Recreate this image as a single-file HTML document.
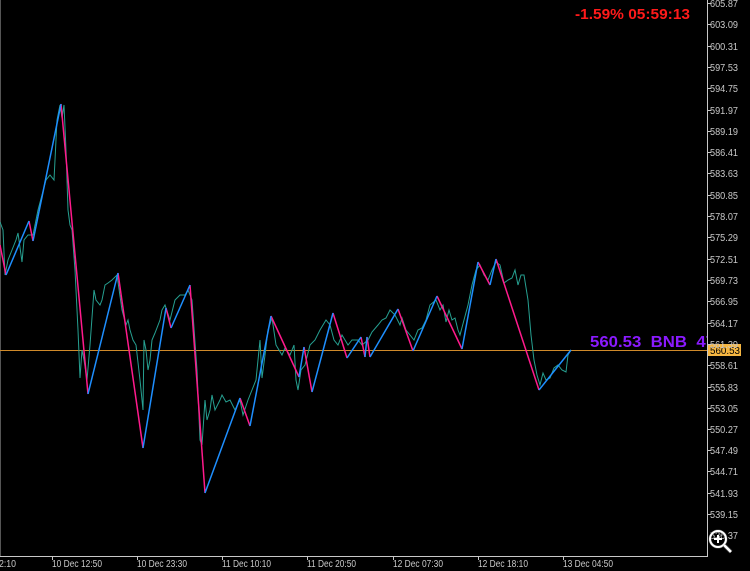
<!DOCTYPE html>
<html><head><style>
html,body{margin:0;padding:0;background:#000;width:750px;height:571px;overflow:hidden}
svg{display:block}
text{font-family:"Liberation Sans",sans-serif}
</style></head><body>
<svg width="750" height="571" viewBox="0 0 750 571" xmlns="http://www.w3.org/2000/svg">
<rect width="750" height="571" fill="#000"/>
<line x1="0.5" y1="0" x2="0.5" y2="556" stroke="#555"/>
<line x1="0" y1="350.5" x2="707" y2="350.5" stroke="#d08a2a"/>
<polyline fill="none" stroke="#26a091" stroke-width="1" points="0,222 3,230 5,275 8,260 12,250 16,240 18,233 22,262 24,240 28,235 33,235 38,210 42,195 46,180 50,175 54,180 55,160 57,120 60,105 62,118 64,105 66,150 68,210 70,225 72,230 75,270 78,330 80,378 82,350 84,360 87,380 90,345 94,290 96,300 100,305 102,300 105,285 108,283 112,280 117,275 122,310 126,325 128,320 130,330 133,340 136,345 140,380 143,410 144,340 146,350 148,370 150,360 152,340 155,333 160,320 162,310 165,305 170,320 175,300 180,295 185,295 188,290 192,300 197,370 200,440 202,445 205,400 207,420 210,410 212,395 215,410 220,400 222,395 226,402 230,400 235,410 240,400 243,415 248,400 252,390 256,380 260,340 262,378 265,355 268,330 272,318 276,345 279,350 282,355 285,348 290,355 294,345 296,380 298,390 301,370 305,365 310,345 315,340 320,330 326,320 330,325 334,340 338,345 342,335 348,345 352,340 358,340 362,345 368,340 372,332 378,325 382,320 386,318 390,310 395,315 400,325 402,318 406,330 410,335 414,340 418,330 422,328 426,320 430,305 436,300 440,310 443,305 446,322 449,310 452,320 455,318 458,330 460,335 464,320 468,305 472,285 476,270 480,265 484,275 488,280 492,270 496,262 500,265 504,283 508,280 512,278 515,270 518,285 521,275 524,275 528,300 531,335 534,360 537,375 540,385 543,373 546,380 550,378 554,368 558,365 562,370 566,372 568,355 571,350"/>
<g fill="none" stroke-width="1.5">
<g stroke="#ff1a8c">
<polyline points="0,245 6,275"/><polyline points="29,221 33,241"/><polyline points="61,104 88,394"/><polyline points="118,273 143,448"/><polyline points="166,308 171,328"/><polyline points="190,285 205,493"/><polyline points="240,398 250,426"/><polyline points="271,316 299,377"/><polyline points="304,347 312,392"/><polyline points="333,313 347,358"/><polyline points="361,337 365,357"/><polyline points="367,337 370,357"/><polyline points="398,309 413,351"/><polyline points="437,296 462,349"/><polyline points="478,262 490,285"/><polyline points="496,259 539,390"/>
</g>
<g stroke="#1e8fff">
<polyline points="6,275 29,221"/><polyline points="33,241 61,104"/><polyline points="88,394 118,273"/><polyline points="143,448 166,308"/><polyline points="171,328 190,285"/><polyline points="205,493 240,398"/><polyline points="250,426 271,316"/><polyline points="299,377 304,347"/><polyline points="312,392 333,313"/><polyline points="347,358 361,337"/><polyline points="365,357 367,337"/><polyline points="370,357 398,309"/><polyline points="413,351 437,296"/><polyline points="462,349 478,262"/><polyline points="490,285 496,259"/><polyline points="539,390 571,350"/>
</g>
</g>
<text x="575" y="19" font-size="15" font-weight="bold" fill="#ff1a1a" textLength="115" lengthAdjust="spacingAndGlyphs">-1.59% 05:59:13</text>
<text x="590" y="347" font-size="16" font-weight="bold" fill="#8a1aff" xml:space="preserve" textLength="125" lengthAdjust="spacingAndGlyphs">560.53  BNB  47</text>
<rect x="708" y="0" width="42" height="571" fill="#000"/>
<line x1="707.5" y1="0" x2="707.5" y2="557" stroke="#c8c8c8"/>
<line x1="0" y1="556.5" x2="708" y2="556.5" stroke="#c8c8c8"/>
<rect x="708" y="344" width="33" height="12" fill="#f5b642"/>
<text x="710" y="354" font-size="10" fill="#000" textLength="30" lengthAdjust="spacingAndGlyphs">560.53</text>
<g fill="#c8c8c8" font-size="10">
<g stroke="#c8c8c8">
<line x1="707" y1="3.5" x2="711" y2="3.5"/><line x1="707" y1="24.5" x2="711" y2="24.5"/><line x1="707" y1="46.5" x2="711" y2="46.5"/><line x1="707" y1="67.5" x2="711" y2="67.5"/><line x1="707" y1="88.5" x2="711" y2="88.5"/><line x1="707" y1="110.5" x2="711" y2="110.5"/><line x1="707" y1="131.5" x2="711" y2="131.5"/><line x1="707" y1="152.5" x2="711" y2="152.5"/><line x1="707" y1="173.5" x2="711" y2="173.5"/><line x1="707" y1="195.5" x2="711" y2="195.5"/><line x1="707" y1="216.5" x2="711" y2="216.5"/><line x1="707" y1="237.5" x2="711" y2="237.5"/><line x1="707" y1="259.5" x2="711" y2="259.5"/><line x1="707" y1="280.5" x2="711" y2="280.5"/><line x1="707" y1="301.5" x2="711" y2="301.5"/><line x1="707" y1="323.5" x2="711" y2="323.5"/><line x1="707" y1="344.5" x2="711" y2="344.5"/><line x1="707" y1="365.5" x2="711" y2="365.5"/><line x1="707" y1="387.5" x2="711" y2="387.5"/><line x1="707" y1="408.5" x2="711" y2="408.5"/><line x1="707" y1="429.5" x2="711" y2="429.5"/><line x1="707" y1="450.5" x2="711" y2="450.5"/><line x1="707" y1="471.5" x2="711" y2="471.5"/><line x1="707" y1="493.5" x2="711" y2="493.5"/><line x1="707" y1="514.5" x2="711" y2="514.5"/>
<line x1="52.5" y1="556" x2="52.5" y2="560"/><line x1="137.5" y1="556" x2="137.5" y2="560"/><line x1="222.5" y1="556" x2="222.5" y2="560"/><line x1="307.5" y1="556" x2="307.5" y2="560"/><line x1="393.5" y1="556" x2="393.5" y2="560"/><line x1="478.5" y1="556" x2="478.5" y2="560"/><line x1="563.5" y1="556" x2="563.5" y2="560"/>
</g>
<text x="710" y="7" textLength="28" lengthAdjust="spacingAndGlyphs">605.87</text><text x="710" y="28" textLength="28" lengthAdjust="spacingAndGlyphs">603.09</text><text x="710" y="50" textLength="28" lengthAdjust="spacingAndGlyphs">600.31</text><text x="710" y="71" textLength="28" lengthAdjust="spacingAndGlyphs">597.53</text><text x="710" y="92" textLength="28" lengthAdjust="spacingAndGlyphs">594.75</text><text x="710" y="114" textLength="28" lengthAdjust="spacingAndGlyphs">591.97</text><text x="710" y="135" textLength="28" lengthAdjust="spacingAndGlyphs">589.19</text><text x="710" y="156" textLength="28" lengthAdjust="spacingAndGlyphs">586.41</text><text x="710" y="177" textLength="28" lengthAdjust="spacingAndGlyphs">583.63</text><text x="710" y="199" textLength="28" lengthAdjust="spacingAndGlyphs">580.85</text><text x="710" y="220" textLength="28" lengthAdjust="spacingAndGlyphs">578.07</text><text x="710" y="241" textLength="28" lengthAdjust="spacingAndGlyphs">575.29</text><text x="710" y="263" textLength="28" lengthAdjust="spacingAndGlyphs">572.51</text><text x="710" y="284" textLength="28" lengthAdjust="spacingAndGlyphs">569.73</text><text x="710" y="305" textLength="28" lengthAdjust="spacingAndGlyphs">566.95</text><text x="710" y="327" textLength="28" lengthAdjust="spacingAndGlyphs">564.17</text><text x="710" y="348" textLength="28" lengthAdjust="spacingAndGlyphs">561.39</text><text x="710" y="369" textLength="28" lengthAdjust="spacingAndGlyphs">558.61</text><text x="710" y="391" textLength="28" lengthAdjust="spacingAndGlyphs">555.83</text><text x="710" y="412" textLength="28" lengthAdjust="spacingAndGlyphs">553.05</text><text x="710" y="433" textLength="28" lengthAdjust="spacingAndGlyphs">550.27</text><text x="710" y="454" textLength="28" lengthAdjust="spacingAndGlyphs">547.49</text><text x="710" y="475" textLength="28" lengthAdjust="spacingAndGlyphs">544.71</text><text x="710" y="497" textLength="28" lengthAdjust="spacingAndGlyphs">541.93</text><text x="710" y="518" textLength="28" lengthAdjust="spacingAndGlyphs">539.15</text><text x="710" y="539" textLength="28" lengthAdjust="spacingAndGlyphs">536.37</text>
<text x="-1" y="567" textLength="17" lengthAdjust="spacingAndGlyphs">2:10</text><text x="52" y="567" textLength="50" lengthAdjust="spacingAndGlyphs">10 Dec 12:50</text><text x="137" y="567" textLength="50" lengthAdjust="spacingAndGlyphs">10 Dec 23:30</text><text x="222" y="567" textLength="49" lengthAdjust="spacingAndGlyphs">11 Dec 10:10</text><text x="307" y="567" textLength="49" lengthAdjust="spacingAndGlyphs">11 Dec 20:50</text><text x="393" y="567" textLength="50" lengthAdjust="spacingAndGlyphs">12 Dec 07:30</text><text x="478" y="567" textLength="50" lengthAdjust="spacingAndGlyphs">12 Dec 18:10</text><text x="563" y="567" textLength="50" lengthAdjust="spacingAndGlyphs">13 Dec 04:50</text>
</g>
<g fill="none" stroke="#fff">
<circle cx="718" cy="539" r="8" stroke-width="3" stroke="#444"/>
<circle cx="718" cy="539" r="8" stroke-width="2"/>
<line x1="724" y1="545" x2="731" y2="552" stroke-width="4" stroke="#444"/>
<line x1="724" y1="545" x2="731" y2="552" stroke-width="2.5"/>
<line x1="714" y1="539" x2="722" y2="539" stroke-width="2"/>
<line x1="718" y1="535" x2="718" y2="543" stroke-width="2"/>
</g>
</svg>
</body></html>
